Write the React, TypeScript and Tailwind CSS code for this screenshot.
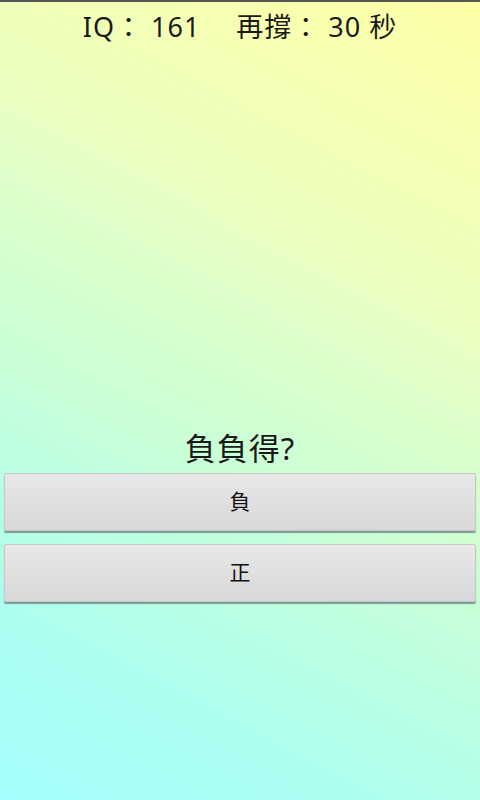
import React from "react";

const font = { fontFamily: '"Noto Sans", "Noto Sans CJK TC", sans-serif' };

export default function App() {
  return (
    <div
      className="w-[480px] h-[800px] flex flex-col bg-[linear-gradient(208deg,#ffffa6_0%,#ecffbf_30%,#c8ffd8_58%,#acfff0_82%,#a6fffd_100%)] text-[#1a1a1a]"
      style={font}
    >
      <div className="h-[2px] bg-[#555] shrink-0" />
      <div className="flex justify-center pt-[8px] text-[27px] leading-[34px] tracking-[1px]">
        <span>IQ： 161</span>
        <span className="ml-[36px]">再撐： 30 秒</span>
      </div>
      <div className="flex-1" />
      <div className="flex flex-col items-stretch px-[4px] pb-[198px]">
        <div className="text-center text-[31px] leading-[38px] mb-[6px] tracking-[1px]">負負得?</div>
        <button className="h-[58px] rounded-[2px] bg-[linear-gradient(to_bottom,#e8e8e8,#d8d8d8)] border border-[#c8c8c8] shadow-[0_2px_1px_#7a9a94] text-[21px] text-[#111] mb-[13px]">
          負
        </button>
        <button className="h-[58px] rounded-[2px] bg-[linear-gradient(to_bottom,#e8e8e8,#d8d8d8)] border border-[#c8c8c8] shadow-[0_2px_1px_#7a9a94] text-[21px] text-[#111]">
          正
        </button>
      </div>
    </div>
  );
}
